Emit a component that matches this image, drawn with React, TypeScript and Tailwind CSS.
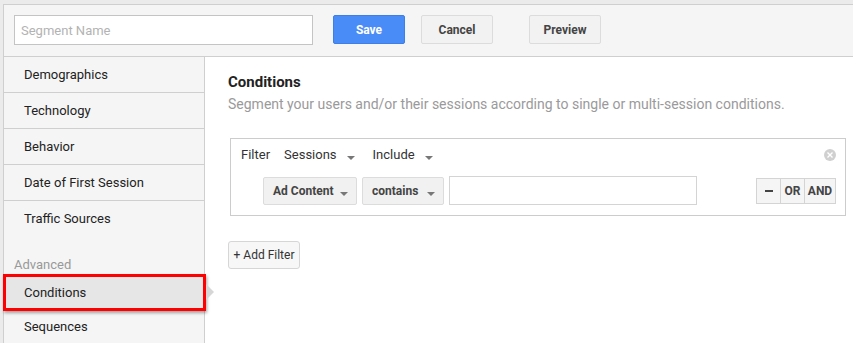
import React from 'react';

const sideItems = ['Demographics', 'Technology', 'Behavior', 'Date of First Session'];

function Caret() {
    return <span className="inline-block w-0 h-0 border-l-[4px] border-r-[4px] border-t-[4px] border-l-transparent border-r-transparent border-t-[#777]" />;
}

export default function App() {
    return (
        <div className="w-[853px] h-[343px] overflow-hidden bg-[#ebebeb] pt-[4px] pl-[3px] font-['Roboto',sans-serif]">
            <div className="h-full bg-white border-t border-l border-[#cfcfcf] flex flex-col">
                {/* Header */}
                <div className="h-[52px] shrink-0 bg-[#f5f5f5] border-b border-[#cfcfcf] flex items-start pt-[10px] pl-[10px]">
                    <input
                        placeholder="Segment Name"
                        className="w-[299px] h-[30px] bg-white border border-[#c4c4c4] px-[6px] text-[13px] text-[#333] placeholder:text-[#b3b3b3] outline-none"
                    />
                    <button className="ml-[20px] w-[72px] h-[29px] rounded-[2px] bg-[#4a8cf7] border border-[#3d7ee8] text-white text-[12px] font-bold">
                        Save
                    </button>
                    <button className="ml-[16px] w-[72px] h-[29px] rounded-[2px] bg-[#f2f2f2] border border-[#dcdcdc] text-[#444] text-[12px] font-bold">
                        Cancel
                    </button>
                    <button className="ml-[36px] w-[72px] h-[29px] rounded-[2px] bg-[#f2f2f2] border border-[#dcdcdc] text-[#444] text-[12px] font-bold">
                        Preview
                    </button>
                </div>

                <div className="flex flex-1 min-h-0">
                    {/* Sidebar */}
                    <div className="w-[201px] shrink-0 bg-[#f5f5f5] border-r border-[#cfcfcf] flex flex-col text-[13px] text-[#222]">
                        {sideItems.map((item) => (
                            <div key={item} className="h-[36px] shrink-0 border-b border-[#cfcfcf] flex items-center pl-[20px]">
                                {item}
                            </div>
                        ))}
                        <div className="h-[36px] shrink-0 flex items-center pl-[20px]">Traffic Sources</div>
                        <div className="mt-[18px] h-[19px] flex items-center pl-[10px] text-[#999]">Advanced</div>
                        <div className="relative h-[37px] shrink-0">
                            <div className="absolute -left-[1px] right-[-2px] top-0 bottom-0 border-[3px] border-[#f00] bg-[#e6e6e6] shadow-[1px_2px_3px_rgba(0,0,0,0.35)] flex items-center pl-[18px]">
                                Conditions
                            </div>
                            <span className="absolute left-[202px] top-[10px] w-0 h-0 border-t-[8px] border-b-[8px] border-l-[8px] border-t-transparent border-b-transparent border-l-[#d6d6d6]" />
                        </div>
                        <div className="h-[34px] flex items-center pl-[20px]">Sequences</div>
                    </div>

                    {/* Main */}
                    <div className="flex-1 pl-[23px] pt-[15px] pr-[6px]">
                        <div className="text-[15px] font-bold text-[#222] leading-[20px]">Conditions</div>
                        <div className="text-[14px] text-[#9a9a9a] leading-[20px] mt-[2px]">
                            Segment your users and/or their sessions according to single or multi-session conditions.
                        </div>

                        <div className="ml-[2px] mt-[24px] w-[616px] h-[78px] border border-[#cccccc] pl-[10px] pr-[9px] pt-[7px]">
                            <div className="flex items-center h-[18px] text-[13px] text-[#333]">
                                <span>Filter</span>
                                <span className="ml-[14px]">Sessions</span>
                                <span className="ml-[10px] mt-[1px]"><Caret /></span>
                                <span className="ml-[18px]">Include</span>
                                <span className="ml-[10px] mt-[1px]"><Caret /></span>
                                <span className="ml-auto w-[12px] h-[12px] rounded-full bg-[#d0d0d0] flex items-center justify-center">
                                    <svg width="6" height="6" viewBox="0 0 6 6">
                                        <path d="M0.5 0.5L5.5 5.5M5.5 0.5L0.5 5.5" stroke="white" strokeWidth="1.4" />
                                    </svg>
                                </span>
                            </div>
                            <div className="flex items-center mt-[12px] pl-[22px]">
                                <div className="w-[94px] h-[28px] bg-[#f1f1f1] border border-[#dcdcdc] rounded-[2px] flex items-center pl-[9px] pr-[8px] text-[12px] font-bold text-[#444]">
                                    Ad Content
                                    <span className="ml-auto mt-[2px]"><Caret /></span>
                                </div>
                                <div className="ml-[5px] w-[82px] h-[28px] bg-[#f1f1f1] border border-[#dcdcdc] rounded-[2px] flex items-center pl-[9px] pr-[8px] text-[12px] font-bold text-[#444]">
                                    contains
                                    <span className="ml-auto mt-[2px]"><Caret /></span>
                                </div>
                                <input className="ml-[5px] w-[248px] h-[29px] bg-white border border-[#d4d4d4] outline-none" />
                                <div className="ml-auto flex h-[26px] border border-[#d4d4d4] bg-[#f5f5f5] text-[12px] font-bold text-[#444]">
                                    <div className="w-[24px] flex items-center justify-center border-r border-[#d4d4d4]">
                                        <span className="w-[8px] h-[2px] bg-[#444]" />
                                    </div>
                                    <div className="w-[24px] flex items-center justify-center border-r border-[#d4d4d4]">OR</div>
                                    <div className="w-[30px] flex items-center justify-center">AND</div>
                                </div>
                            </div>
                        </div>

                        <button className="mt-[25px] w-[72px] h-[28px] bg-[#f7f7f7] border border-[#d6d6d6] rounded-[3px] text-[12px] text-[#333]">
                            + Add Filter
                        </button>
                    </div>
                </div>
            </div>
        </div>
    );
}
